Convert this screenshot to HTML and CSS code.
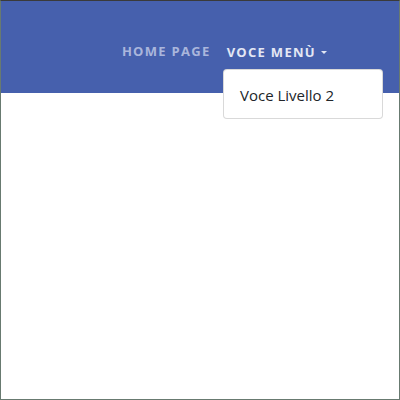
FILE: index.html
```html
<!DOCTYPE html>
<html lang="it">
<head>
<meta charset="utf-8">
<title>Menu</title>
<link rel="stylesheet" href="styles.css">
</head>
<body>
<div class="frame">
  <header class="navbar">
    <nav class="nav">
      <a class="nav-link" href="#">Home Page</a>
      <div class="nav-item dropdown">
        <a class="nav-link active" href="#">Voce Menù<span class="caret"></span></a>
        <div class="dropdown-menu">
          <a class="dropdown-item" href="#">Voce Livello 2</a>
        </div>
      </div>
    </nav>
  </header>
  <main class="content"></main>
</div>
</body>
</html>
```
FILE: styles.css
```css
* { box-sizing: border-box; }
html, body { margin: 0; padding: 0; }
body { width: 400px; height: 400px; font-family: "Open Sans", "DejaVu Sans", sans-serif; }
.frame {
  width: 400px;
  height: 400px;
  border: 1px solid #687a70;
  border-top-color: #3a3a3a;
  display: flex;
  flex-direction: column;
  background: #fff;
}
.navbar {
  background: #4660ad;
  height: 92px;
  flex: none;
}
.nav {
  display: flex;
  justify-content: flex-end;
  align-items: center;
  padding: 39px 72px 0 0;
  gap: 16px;
}
.nav-item { position: relative; }
.nav-link {
  display: inline-flex;
  align-items: center;
  font-size: 13px;
  font-weight: 700;
  text-transform: uppercase;
  letter-spacing: 1.3px;
  color: #aab6dc;
  text-decoration: none;
  line-height: 18px;
}
.nav-link.active { color: #e3e7f4; }
.caret {
  display: inline-block;
  width: 0;
  height: 0;
  margin-left: 5px;
  margin-top: 1px;
  border-left: 3px solid transparent;
  border-right: 3px solid transparent;
  border-top: 3px solid #e3e7f4;
}
.dropdown-menu {
  position: absolute;
  top: 29px;
  right: -56px;
  width: 160px;
  height: 50px;
  background: #fff;
  border: 1px solid rgba(0,0,0,0.15);
  border-radius: 4px;
  padding: 9px 0 8px;
}
.dropdown-item {
  display: block;
  padding: 4px 16px;
  font-size: 15px;
  line-height: 24px;
  color: #212529;
  text-decoration: none;
}
.content { flex: 1; }
```
